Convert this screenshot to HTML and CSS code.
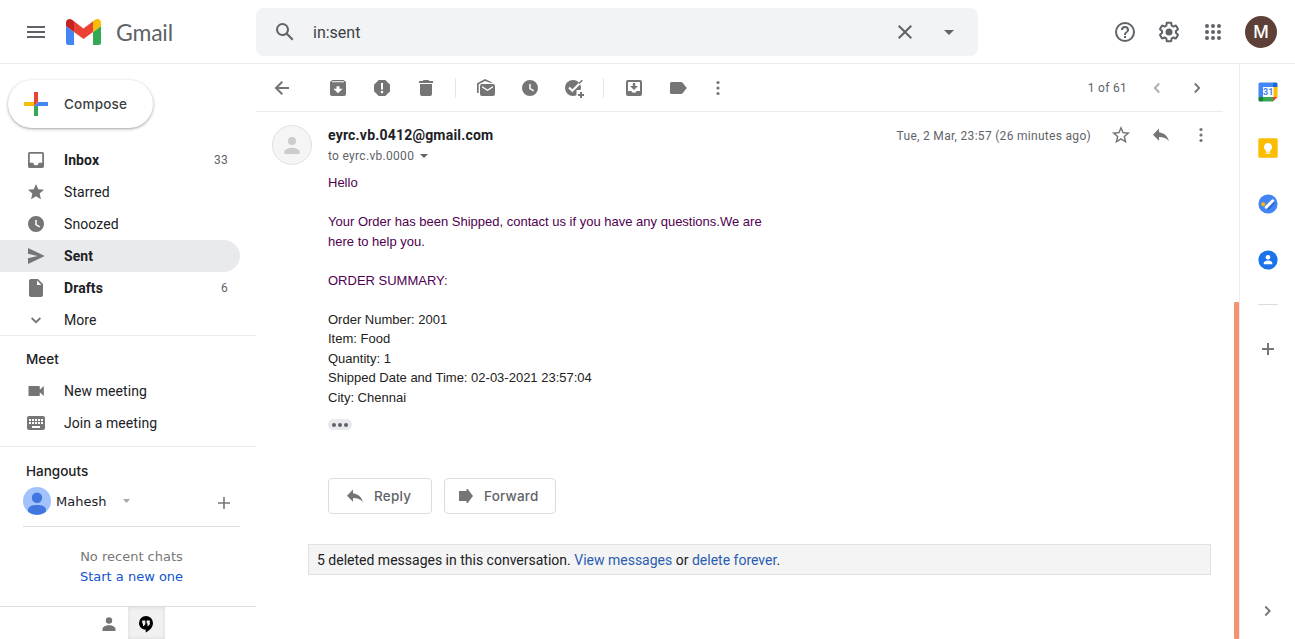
FILE: index.html
```
<!DOCTYPE html>
<html lang="en">
<head>
<meta charset="utf-8">
<title>Gmail</title>
<link rel="stylesheet" href="styles.css">
</head>
<body>
<header class="topbar">
  <div class="brand">
    <svg class="menu" width="24" height="24" viewBox="0 0 24 24"><path d="M3 18h18v-2H3v2zm0-5h18v-2H3v2zm0-7v2h18V6H3z"/></svg>
    <svg class="logo" width="35" height="26" viewBox="0 0 35 26"><path fill="#4285f4" d="M0 7l8 6v13H2.500Q0 26 0 23.500z"/><path fill="#34a853" d="M35 7l-8 6v13h5.500Q35 26 35 23.500z"/><path fill="#ea4335" d="M8 2.300l9.500 7.100L27 2.300V13l-9.500 7L8 13z"/><path fill="#c5221f" d="M0 3.500C0 .6 3.500-1 6 .800l2 1.500V13L0 7z"/><path fill="#fbbc04" d="M35 3.500C35 .6 31.500-1 29 .800l-2 1.500V13l8-6z"/></svg>
    <span class="brand-name">Gmail</span>
  </div>
  <div class="search">
    <svg class="search-icon" width="24" height="24" viewBox="0 0 24 24"><path d="M20.490 19l-5.730-5.730C15.530 12.200 16 10.910 16 9.500A6.500 6.500 0 1 0 9.500 16c1.410 0 2.700-.470 3.770-1.240L19 20.490 20.490 19zM5 9.500C5 7.010 7.010 5 9.500 5S14 7.010 14 9.500 11.990 14 9.500 14 5 11.990 5 9.500z"/></svg>
    <span class="query">in:sent</span>
    <svg class="clear" width="24" height="24" viewBox="0 0 24 24"><path d="M19 6.410L17.590 5 12 10.590 6.410 5 5 6.410 10.590 12 5 17.590 6.410 19 12 13.410 17.590 19 19 17.590 13.410 12z"/></svg>
    <svg width="24" height="24" viewBox="0 0 24 24"><path d="M7 10l5 5 5-5z"/></svg>
  </div>
  <div class="account">
    <svg width="24" height="24" viewBox="0 0 24 24"><path d="M11 18h2v-2h-2v2zm1-16a10 10 0 1 0 0 20 10 10 0 0 0 0-20zm0 18a8 8 0 1 1 0-16 8 8 0 0 1 0 16zm0-14a4 4 0 0 0-4 4h2a2 2 0 1 1 4 0c0 2-3 1.750-3 5h2c0-2.250 3-2.500 3-5a4 4 0 0 0-4-4z"/></svg>
    <svg width="24" height="24" viewBox="0 0 24 24"><path d="M13.850 22.250h-3.700c-.740 0-1.360-.540-1.450-1.270l-.270-1.890c-.270-.140-.530-.290-.790-.460l-1.800.720c-.700.260-1.470-.030-1.810-.650L2.200 15.530c-.350-.660-.200-1.440.360-1.880l1.530-1.190c-.010-.150-.020-.300-.020-.460 0-.150.010-.310.020-.460l-1.520-1.190c-.590-.450-.740-1.260-.370-1.880l1.850-3.190c.340-.620 1.110-.900 1.790-.630l1.810.730c.260-.170.520-.320.780-.460l.270-1.910c.090-.700.710-1.250 1.440-1.250h3.700c.740 0 1.360.540 1.450 1.270l.270 1.890c.270.140.530.290.790.460l1.800-.720c.710-.260 1.480.030 1.820.650l1.840 3.180c.360.660.200 1.440-.360 1.880l-1.520 1.190c.010.150.020.300.020.460s-.010.310-.020.460l1.520 1.190c.560.450.720 1.230.370 1.860l-1.860 3.220c-.340.620-1.110.900-1.800.630l-1.800-.720c-.260.170-.520.320-.780.460l-.270 1.910c-.100.680-.720 1.220-1.460 1.220zm-3.230-2h2.760l.370-2.550.530-.220c.440-.180.880-.440 1.340-.780l.450-.340 2.380.960 1.380-2.400-2.030-1.580.070-.560c.030-.260.060-.510.060-.780s-.030-.530-.060-.780l-.070-.560 2.030-1.580-1.390-2.400-2.390.960-.450-.350c-.420-.320-.870-.580-1.330-.770l-.520-.220-.370-2.550h-2.760l-.370 2.550-.530.210c-.440.190-.880.440-1.340.790l-.450.330-2.380-.950-1.390 2.390 2.030 1.580-.070.560a7 7 0 0 0-.060.790c0 .260.020.530.060.780l.070.560-2.030 1.580 1.380 2.400 2.390-.960.450.350c.430.330.860.580 1.330.770l.530.220z"/><circle cx="12" cy="12" r="3.500"/></svg>
    <svg width="24" height="24" viewBox="0 0 24 24"><g id="dots"><circle cx="6" cy="6" r="2"/><circle cx="12" cy="6" r="2"/><circle cx="18" cy="6" r="2"/></g><use href="#dots" y="6"/><use href="#dots" y="12"/></svg>
    <span class="avatar">M</span>
  </div>
</header>
<div class="layout">
  <aside class="sidebar">
    <button class="compose">
      <svg width="24" height="24" viewBox="0 0 24 24"><path fill="#fbbc04" d="M0 10h10v4H0z"/><path fill="#34a853" d="M10 14l4-2v12h-4z"/><path fill="#4285f4" d="M14 10h10v4H10z"/><path fill="#ea4335" d="M10 0h4v10l-4 4z"/></svg>
      <span>Compose</span>
    </button>
    <nav class="folders">
      <a class="row strong"><svg class="icon" viewBox=".75 .75 22.500 22.500"><path d="M19 3H5a2 2 0 0 0-2 2v14c0 1.100.900 2 2 2h14a2 2 0 0 0 2-2V5a2 2 0 0 0-2-2zm0 12h-4c0 1.660-1.350 3-3 3s-3-1.340-3-3H5V5h14v10z"/></svg><span class="label">Inbox</span><span class="count">33</span></a>
      <a class="row"><svg class="icon" viewBox="-.5 -.5 25 25"><path d="M12 17.270L18.180 21l-1.640-7.030L22 9.240l-7.190-.610L12 2 9.190 8.630 2 9.240l5.460 4.730L5.820 21z"/></svg><span class="label">Starred</span></a>
      <a class="row"><svg class="icon" viewBox="-.5 -.5 25 25"><path fill-rule="evenodd" d="M12 2a10 10 0 1 0 0 20 10 10 0 0 0 0-20zm-1 5h1.900v5.400l4.200 2.500-.9 1.500L11 13.300z"/></svg><span class="label">Snoozed</span></a>
      <a class="row strong selected"><svg class="icon" viewBox="-.5 -.5 25 25"><path d="M2 22l21-10L2 2v7.300L14 12 2 14.700z"/></svg><span class="label">Sent</span></a>
      <a class="row strong"><svg class="icon" viewBox="0 0 20 20"><path fill-rule="evenodd" d="M5 1a2 2 0 0 0-2 2v14c0 1.100.900 2 2 2h10a2 2 0 0 0 2-2V6l-5-5H5zm6 1.500L15.500 7H11V2.500z"/></svg><span class="label">Drafts</span><span class="count">6</span></a>
      <a class="row"><svg class="icon line" viewBox="0 0 20 20"><path d="M5.600 8l4.400 4.200L14.400 8"/></svg><span class="label">More</span></a>
    </nav>
    <section class="meet">
      <h2>Meet</h2>
      <a class="row"><svg class="icon" viewBox="0 0 20 20"><path d="M2.500 5h10.500q.8 0 .8.800v3L17.800 5v10l-4-3.800v3q0 .8-.8.800H2.500z"/></svg><span class="label">New meeting</span></a>
      <a class="row"><svg class="icon" viewBox="0 0 20 20"><path fill-rule="evenodd" d="M3 3h14a2 2 0 0 1 2 2v10a2 2 0 0 1-2 2H3a2 2 0 0 1-2-2V5a2 2 0 0 1 2-2zm0 3v2h2V6zm3 0v2h2V6zm3 0v2h2V6zm3 0v2h2V6zm3 0v2h2V6zM3 9v2h2V9zm3 0v2h2V9zm3 0v2h2V9zm3 0v2h2V9zm3 0v2h2V9zM6 13v2h8v-2z"/></svg><span class="label">Join a meeting</span></a>
    </section>
    <section class="hangouts">
      <h2>Hangouts</h2>
      <div class="person">
        <svg width="28" height="28" viewBox="0 0 28 28"><circle cx="14" cy="14" r="14" fill="#a1c2fa"/><circle cx="14" cy="10.700" r="5.200" fill="#4175df"/><path fill="#4175df" d="M5 24.500v-1.500c0-3.700 4.500-5 9-5s9 1.300 9 5v1.500a14 14 0 0 1-18 0z"/></svg>
        <span class="person-name">Mahesh</span>
        <svg class="person-caret" width="7" height="4" viewBox="0 0 7 4"><path d="M0 0h7L3.500 4z"/></svg>
        <svg class="person-add" width="12" height="12" viewBox="0 0 12 12"><path d="M5.200 0h1.600v5.200H12v1.600H6.800V12H5.200V6.800H0V5.200h5.200z"/></svg>
      </div>
      <div class="chats"><p>No recent chats</p><a>Start a new one</a></div>
    </section>
    <footer class="tabs">
      <span class="tab"><svg width="14" height="14" viewBox="0 0 14 14"><circle cx="7" cy="3.500" r="3.200"/><path d="M.5 14v-2c0-2 3-3.700 6.500-3.700s6.500 1.700 6.500 3.700v2z"/></svg></span>
      <span class="tab active"><svg width="14" height="17" viewBox="0 0 14 17"><path fill="#000" d="M7 0a7 7 0 0 0-7 7c0 3.800 3 6.700 6.700 6.700V16.500c3.800-1.900 7.300-5 7.300-9.500a7 7 0 0 0-7-7z"/><path fill="#f1f1f1" d="M3.200 4.500h3.100v3.800L4.800 10H4V7.600H3.200zm4.500 0h3.100v3.800L9.300 10h-.8V7.600h-.8z"/></svg></span>
    </footer>
  </aside>
  <main class="main">
    <div class="toolbar">
      <span class="tool back"><svg class="icon" viewBox="0 0 20 20"><path class="stroke" d="M17 10H4.500M10.300 3.700L4 10l6.300 6.300"/></svg></span>
      <span class="tool"><svg class="icon" viewBox="0 0 20 20"><path fill-rule="evenodd" d="M4.500 2h11L18 4v12a2 2 0 0 1-2 2H4a2 2 0 0 1-2-2V4zM4 3.300v.9h12v-.9zm4.500 4.900v2.600H5.300L10 15.300l4.700-4.500h-3.200V8.200z"/></svg></span>
      <span class="tool"><svg class="icon" viewBox="0 0 20 20"><path fill-rule="evenodd" d="M6.700 2h6.600L18 6.700v6.600L13.300 18H6.700L2 13.300V6.700zM9 5v6.500h2V5zm1 7.800a1.300 1.300 0 1 0 0 2.600 1.300 1.300 0 0 0 0-2.600z"/></svg></span>
      <span class="tool"><svg class="icon" viewBox="0 0 20 20"><path d="M7.500 2h5l.8 1H17v2H3V3h3.700zM4 6h12v10a2 2 0 0 1-2 2H6a2 2 0 0 1-2-2z"/></svg></span>
      <span class="divider"></span>
      <span class="tool"><svg class="icon" viewBox="0 0 20 20"><path fill-rule="evenodd" d="M6 6h11a2 2 0 0 1 2 2v8a2 2 0 0 1-2 2H6a2 2 0 0 1-2-2V8a2 2 0 0 1 2-2zm0 2v1.600l5.500 3.400L17 9.600V8l-5.500 3.400z"/><path d="M1 15V5.300L9 1l8 3.800H14L9 2.900 2.700 6.200V15z"/></svg></span>
      <span class="tool"><svg class="icon" viewBox="-.5 -.5 25 25"><path fill-rule="evenodd" d="M12 2a10 10 0 1 0 0 20 10 10 0 0 0 0-20zm-1 5h1.900v5.400l4.200 2.500-.9 1.500L11 13.300z"/></svg></span>
      <span class="tool"><svg class="icon" viewBox="0 0 20 20"><circle cx="9" cy="10" r="8"/><path fill="none" stroke="#fff" stroke-width="2" d="M5 9.500l3.300 3.300 8.500-8.500"/><path fill="none" stroke="#757575" stroke-width="1.600" d="M15 5.500l3.300-3.300"/><path fill="#fff" d="M12.500 12H20v8h-7.500z"/><path d="M16 14h2v2h2v2h-2v2h-2v-2h-2v-2h2z"/></svg></span>
      <span class="divider"></span>
      <span class="tool"><svg class="icon" viewBox="0 0 20 20"><path fill-rule="evenodd" d="M4 2h12a2 2 0 0 1 2 2v12a2 2 0 0 1-2 2H4a2 2 0 0 1-2-2V4a2 2 0 0 1 2-2zm0 2v9h3.300a2.900 2.900 0 0 0 5.400 0H16V4zm4.800 1h2.400v3H14l-4 4-4-4h2.800z"/></svg></span>
      <span class="tool"><svg class="icon" viewBox="0 0 20 20"><path d="M3.500 4H13q1 0 1.600.7l4.200 5.300-4.200 5.300Q14 16 13 16H3.500Q2 16 2 14.500v-9Q2 4 3.500 4z"/></svg></span>
      <span class="tool more"><svg class="icon" viewBox="0 0 20 20"><circle cx="10" cy="4.500" r="1.600"/><circle cx="10" cy="10" r="1.600"/><circle cx="10" cy="15.500" r="1.600"/></svg></span>
      <span class="pager">1 of 61</span>
      <span class="tool faded"><svg class="icon line" viewBox="0 0 20 20"><path d="M12.200 5.500L7.800 10l4.400 4.500"/></svg></span>
      <span class="tool next"><svg class="icon line" viewBox="0 0 20 20"><path d="M7.800 5.500l4.400 4.500-4.400 4.500"/></svg></span>
    </div>
    <article class="message">
      <svg class="sender-avatar" width="40" height="40" viewBox="0 0 40 40"><circle cx="20" cy="20" r="19.500" fill="#f5f5f5" stroke="#dfdfdf"/><circle cx="20" cy="16" r="4" fill="#ccc"/><path fill="#ccc" d="M12.300 29v-2c0-2.600 4-4.200 7.700-4.200s7.700 1.600 7.700 4.200v2z"/></svg>
      <div class="content">
        <div class="message-head">
          <div>
            <div class="sender">eyrc.vb.0412@gmail.com</div>
            <div class="recipient"><span>to eyrc.vb.0000</span><svg width="8" height="4" viewBox="0 0 8 4"><path d="M0 0h8L4 4z"/></svg></div>
          </div>
          <div class="meta">
            <span class="date">Tue, 2 Mar, 23:57 (26 minutes ago)</span>
            <span class="tool"><svg class="icon" viewBox="1 1 22 22"><path d="M22 9.240l-7.190-.620L12 2 9.190 8.630 2 9.240l5.460 4.730L5.820 21 12 17.270 18.180 21l-1.630-7.030L22 9.240zM12 15.400l-3.760 2.270 1-4.280-3.320-2.880 4.380-.380L12 6.100l1.710 4.040 4.380.380-3.320 2.880 1 4.280L12 15.400z"/></svg></span>
            <span class="tool"><svg class="icon" viewBox="0 0 20 20"><path d="M8 7.200V3.500L2 9.700l6 6v-3.700c4.500 0 7.700 1.300 10 4.300-1-4.500-4-8.300-10-9.100z"/></svg></span>
            <span class="tool"><svg class="icon" viewBox="0 0 20 20"><circle cx="10" cy="4.500" r="1.600"/><circle cx="10" cy="10" r="1.600"/><circle cx="10" cy="15.500" r="1.600"/></svg></span>
          </div>
        </div>
        <div class="body"><div class="quoted">Hello<br><br>Your Order has been Shipped, contact us if you have any questions.We are<br>here to help you.<br><br>ORDER SUMMARY:<br><br></div>Order Number: 2001<br>Item: Food<br>Quantity: 1<br>Shipped Date and Time: 02-03-2021 23:57:04<br>City: Chennai</div>
        <div class="trimmed"><i></i><i></i><i></i></div>
        <div class="actions">
          <button class="action reply"><svg class="icon" viewBox="0 0 20 20"><path d="M8 7.200V3.500L2 9.700l6 6v-3.700c4.500 0 7.700 1.300 10 4.300-1-4.500-4-8.300-10-9.100z"/></svg><span>Reply</span></button>
          <button class="action forward"><svg class="icon" viewBox="0 0 20 20"><path d="M3 5h7.500V3h1.200l5.300 7-5.300 7h-1.200v-2H3z"/></svg><span>Forward</span></button>
        </div>
      </div>
    </article>
    <div class="notice">5 deleted messages in this conversation. <a>View messages</a> or <a>delete forever</a>.</div>
    <div class="scrollbar"></div>
  </main>
  <aside class="addons">
    <svg width="20" height="20" viewBox="0 0 20 20"><path fill="#4285f4" d="M2 .5h13V5H5v10H.5V2Q.5.500 2 .5z"/><path fill="#1967d2" d="M15 .5h3Q19.500.500 19.500 2v3H15z"/><path fill="#fbbc04" d="M15 5h4.500v10H15z"/><path fill="#34a853" d="M5 15h10v4.500H5z"/><path fill="#188038" d="M.5 15H5v4.500H2Q.5 19.500.5 18z"/><path fill="#ea4335" d="M15 15h4.500L15 19.500z"/><path fill="#fff" d="M5 5h10.500v10H5z"/><text class="cal-day" x="10.200" y="13.400" text-anchor="middle">31</text></svg>
    <svg width="20" height="20" viewBox="0 0 20 20"><rect x=".3" y=".3" width="19.400" height="19.400" rx="1.500" fill="#fbbc04"/><path fill="#fff" d="M10 5a4.100 4.100 0 0 0-2.200 7.500v1.200h4.400v-1.200A4.100 4.100 0 0 0 10 5zM7.800 14.500h4.400v1.300H7.800z"/></svg>
    <svg width="20" height="20" viewBox="0 0 20 20"><circle cx="10" cy="10" r="9.600" fill="#4285f4"/><path stroke="#3367d6" stroke-width="3.400" d="M9 15l7-7"/><circle cx="5.200" cy="10.200" r="2" fill="#fbbc04"/><path stroke="#fff" stroke-width="3" stroke-linecap="round" d="M8.200 13.300l6.500-6.500"/></svg>
    <svg width="20" height="20" viewBox="0 0 20 20"><circle cx="10" cy="10" r="9.600" fill="#1a73e8"/><circle cx="10" cy="7.300" r="2.300" fill="#fff"/><path fill="#fff" d="M5.700 14.300v-1c0-2 2.500-2.800 4.300-2.800s4.300.8 4.300 2.800v1z"/></svg>
    <hr>
    <svg class="add" width="12" height="12" viewBox="0 0 12 12"><path d="M5 0h2v5h5v2H7v5H5V7H0V5h5z"/></svg>
    <svg class="icon line expand" viewBox="0 0 20 20"><path d="M7.300 5.500l4.400 4.500-4.400 4.500"/></svg>
  </aside>
</div>
</body>
</html>
```

FILE: styles.css
```
* { box-sizing: border-box; }

body {
  margin: 0;
  height: 639px;
  overflow: hidden;
  display: flex;
  flex-direction: column;
  font-family: Roboto, "Liberation Sans", sans-serif;
  font-size: 14px;
  color: #202124;
  background: #fff;
  white-space: nowrap;
}

svg { display: block; flex: none; fill: #5f6368; }
button { margin: 0; font: inherit; background: #fff; }
h2, p { margin: 0; }

.icon { width: 20px; height: 20px; fill: #757575; }
.line path, .stroke { fill: none; stroke: #757575; stroke-width: 2; }
.line path { stroke-width: 1.800; }

/* Header */
.topbar { height: 64px; flex: none; display: flex; border-bottom: 1px solid #ebebeb; }
.brand { width: 256px; display: flex; align-items: center; padding-left: 24px; }
.logo { margin-left: 18px; }
.brand-name { margin-left: 15px; font-family: Lato, sans-serif; font-size: 23px; line-height: 28px; letter-spacing: -.200px; color: #5f6368; }
.search { width: 722px; height: 48px; margin-top: 8px; padding: 0 17px; display: flex; align-items: center; background: #f1f3f4; border-radius: 8px; }
.query { flex: 1; margin-left: 16px; font-size: 16px; color: #3c4043; }
.clear { margin-right: 20px; }
.account { flex: 1; display: flex; align-items: center; justify-content: flex-end; gap: 20px; padding-right: 18px; }
.avatar { width: 32px; height: 32px; border-radius: 50%; background: #5d4037; color: #fff; font-family: Inter, sans-serif; font-size: 17px; font-weight: 500; line-height: 33px; text-align: center; }

/* Sidebar */
.layout { flex: 1; min-height: 0; display: flex; }
.sidebar { width: 256px; display: flex; flex-direction: column; }
.compose { width: 145px; height: 48px; margin: 16px 0 16px 8px; padding: 0 0 0 16px; display: flex; align-items: center; gap: 16px; border: 0; border-radius: 24px; box-shadow: 0 1px 2px rgba(60,64,67,.300), 0 1px 3px 1px rgba(60,64,67,.150); font-family: Inter, sans-serif; font-size: 13.500px; font-weight: 500; letter-spacing: .200px; color: #3c4043; }
.row { height: 32px; padding: 0 12px 0 26px; margin-right: 16px; display: flex; align-items: center; border-radius: 0 16px 16px 0; }
.label { flex: 1; margin-left: 18px; letter-spacing: .080px; }
.strong .label { font-weight: 700; }
.count { font-size: 12px; letter-spacing: .300px; color: #5f6368; }
.selected { background: #e8eaed; }
.folders { height: 192px; border-bottom: 1px solid #ebebeb; }
.meet { height: 111px; padding-top: 7px; border-bottom: 1px solid #ebebeb; }
h2 { padding-left: 26px; font-family: Inter, sans-serif; font-size: 13.500px; font-weight: 500; line-height: 32px; }
.hangouts { flex: 1; padding-top: 8px; font-family: "DejaVu Sans", sans-serif; font-size: 13px; }
.person { height: 40px; margin: 0 16px 0 23px; padding-bottom: 11px; display: flex; align-items: center; border-bottom: 1px solid #dadce0; }
.person-name { margin-left: 5px; }
.person-caret { margin-left: 17px; fill: #aaa; }
.person-add { margin: 3px 10px 0 auto; fill: #777; }
.chats { padding-top: 20px; margin-left: 7px; text-align: center; line-height: 20px; color: #777; }
.chats a { color: #15c; }
.tabs { height: 33px; display: flex; padding-left: 91px; border-top: 1px solid #dadce0; }
.tab { width: 37px; padding: 2px 1px 0 0; display: flex; align-items: center; justify-content: center; }
.tab svg { fill: #757575; }
.active { background: #f1f1f1; box-shadow: inset 0 0 4px rgba(0,0,0,.100); }

/* Conversation */
.main { width: 983px; position: relative; }
.toolbar { height: 48px; width: 967px; padding: 0 6px; display: flex; align-items: center; gap: 4px; border-bottom: 1px solid #ebebeb; }
.tool { width: 40px; display: flex; justify-content: center; flex: none; }
.toolbar .back { margin-right: 12px; }
.toolbar .more { width: 32px; }
.divider { width: 12px; height: 20px; background: linear-gradient(#e5e5e5, #e5e5e5) 5px 0 / 1px 100% no-repeat; }
.pager { margin-left: auto; margin-right: 6px; font-size: 12px; letter-spacing: .300px; color: #5f6368; }
.faded { opacity: .6; }
.toolbar .next { margin-left: -4px; }
.message { display: flex; padding: 13px 18px 0 16px; }
.sender-avatar { margin-right: 16px; }
.content { flex: 1; }
.message-head { display: flex; justify-content: space-between; height: 48px; }
.sender { font-weight: 700; line-height: 20px; letter-spacing: .200px; }
.recipient { display: flex; align-items: center; gap: 6px; line-height: 22px; font-size: 12px; letter-spacing: .300px; color: #5f6368; }
.meta { height: 20px; display: flex; align-items: center; }
.date { margin-right: 10px; padding-top: 1px; font-size: 12px; letter-spacing: .300px; color: #5f6368; }
.body { font: 13px/19.500px "Liberation Sans", Arial, sans-serif; color: #222; }
.quoted { color: #500050; }
.trimmed { width: 24px; height: 11px; margin-top: 12px; display: flex; align-items: center; justify-content: center; gap: 2px; border-radius: 6px; background: #e8eaed; }
.trimmed i { width: 4px; height: 4px; border-radius: 50%; background: #5f6368; }
.actions { display: flex; gap: 12px; margin-top: 48px; }
.action { height: 36px; display: flex; align-items: center; border: 1px solid #dadce0; border-radius: 4px; padding: 0; font-family: Inter, sans-serif; font-size: 13.500px; font-weight: 500; letter-spacing: .200px; color: #5f6368; }
.reply { width: 104px; padding-left: 16px; gap: 9px; }
.forward { width: 112px; padding-left: 11px; gap: 8px; }
.notice { width: 903px; height: 31px; margin: 30px 0 0 52px; padding-left: 8px; line-height: 30px; background: #f4f4f4; border: 1px solid #e1e1e1; }
.notice a { color: #2a5db0; }
.scrollbar { position: absolute; right: 0; top: 238px; bottom: 0; width: 5px; background: #f4936d; border-radius: 1px; }

/* Add-on rail */
.addons { flex: 1; padding: 18px 0; display: flex; flex-direction: column; align-items: center; gap: 36px; border-left: 1px solid #ebebeb; }
.addons > svg { margin-left: 1px; }
.cal-day { fill: #4285f4; font: bold 9px Roboto, sans-serif; }
.addons hr { width: 20px; margin: -2px 0 2px 1px; border: 0; border-top: 1px solid #dadce0; }
.addons .add { fill: #777; }
.addons .expand { margin-top: auto; margin-left: 0; }
```
